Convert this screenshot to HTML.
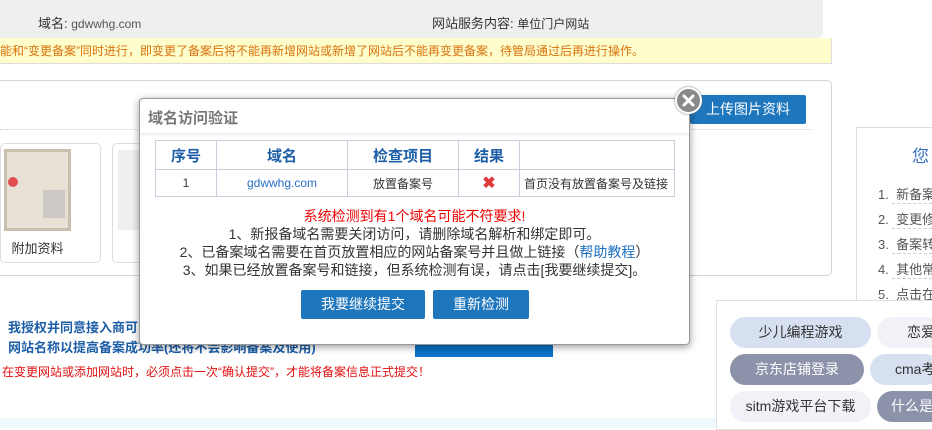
<!DOCTYPE html>
<html><head><meta charset="utf-8">
<style>
*{margin:0;padding:0;box-sizing:border-box}
body{width:932px;height:428px;overflow:hidden;background:#fff;font-family:"Liberation Sans","Noto Sans CJK SC",sans-serif;position:relative;font-size:12px;color:#333}
.a{position:absolute}
.tag{position:absolute;height:31px;border-radius:16px;font-size:14px;line-height:31px;text-align:center;white-space:nowrap;overflow:hidden}
</style></head><body>
<div class="a" style="left:0;top:0;width:823px;height:38px;background:#efefef;border-bottom-right-radius:6px"></div>
<div class="a" style="left:38px;top:13px;font-size:13px;color:#333">域名: <span style="font-size:12px;color:#555">gdwwhg.com</span></div>
<div class="a" style="left:432px;top:13px;font-size:13px;color:#333">网站服务内容: <span style="font-size:12px">单位门户网站</span></div>
<div class="a" style="left:0;top:38px;width:832px;height:26px;background:#fefdcc;border-bottom:1px solid #ddd;border-right:1px solid #ddd;color:#d9730e;font-size:12px;line-height:26px;white-space:nowrap">能和“变更备案”同时进行，即变更了备案后将不能再新增网站或新增了网站后不能再变更备案，待管局通过后再进行操作。</div>

<div class="a" style="left:-5px;top:80px;width:837px;height:196px;border:1px solid #d5d5d5;border-radius:5px"></div>
<div class="a" style="left:690px;top:95px;width:116px;height:29px;background:#1e76bd;border-radius:2px;color:#fff;font-size:14px;line-height:29px;text-align:center">上传图片资料</div>
<div class="a" style="left:0;top:129px;width:812px;border-top:1px dotted #ccc"></div>
<div class="a" style="left:0;top:143px;width:101px;height:120px;border:1px solid #ddd;border-radius:5px"></div>
<div class="a" style="left:4px;top:149px;width:67px;height:82px;background:#e8e2d6;border:3px solid #c9bfae"></div>
<div class="a" style="left:8px;top:177px;width:10px;height:10px;border-radius:50%;background:#e05050"></div>
<div class="a" style="left:43px;top:190px;width:22px;height:28px;background:#bbb;opacity:.6"></div>
<div class="a" style="left:0;top:238px;width:75px;text-align:center;font-size:13px">附加资料</div>
<div class="a" style="left:112px;top:143px;width:40px;height:120px;border:1px solid #ddd;border-radius:5px"></div>
<div class="a" style="left:118px;top:150px;width:30px;height:80px;background:#eef0f0"></div>

<div class="a" style="left:8px;top:318px;font-size:13px;font-weight:bold;color:#1d5ea8;line-height:20px">我授权并同意接入商可<br>网站名称以提高备案成功率(还将不会影响备案及使用)</div>
<div class="a" style="left:415px;top:333px;width:138px;height:24px;background:#0b73c8"></div>
<div class="a" style="left:2px;top:363px;font-size:12px;color:#e01010;white-space:nowrap">在变更网站或添加网站时，必须点击一次“确认提交”，才能将备案信息正式提交！</div>
<div class="a" style="left:0;top:418px;width:720px;height:10px;background:#eef8fd"></div>

<div class="a" style="left:856px;top:127px;width:80px;height:200px;border:1px solid #ddd"></div>
<div class="a" style="left:912px;top:142px;font-size:17px;color:#3a6fc0">您</div>
<div class="a" style="left:878px;top:182px;width:60px;font-size:13px;color:#555;line-height:25px;white-space:nowrap">
<div>1.&nbsp; 新备案</div><div>2.&nbsp; 变更修</div><div>3.&nbsp; 备案转</div><div>4.&nbsp; 其他常</div><div>5.&nbsp; 点击在</div></div>
<div class="a" style="left:892px;top:203px;width:40px;border-top:1px dashed #ccc"></div>
<div class="a" style="left:892px;top:228px;width:40px;border-top:1px dashed #ccc"></div>
<div class="a" style="left:892px;top:253px;width:40px;border-top:1px dashed #ccc"></div>
<div class="a" style="left:892px;top:278px;width:40px;border-top:1px dashed #ccc"></div>

<div class="a" style="left:716px;top:300px;width:220px;height:130px;background:#fff;border:1px solid #e0e0e0"></div>
<div class="tag" style="left:730px;top:317px;width:141px;background:#d6e0f0;color:#333">少儿编程游戏</div>
<div class="tag" style="left:877px;top:317px;width:70px;background:#f0f2f7;color:#333;text-align:left;padding-left:30px">恋爱</div>
<div class="tag" style="left:730px;top:354px;width:134px;background:#8d92ab;color:#fff">京东店铺登录</div>
<div class="tag" style="left:870px;top:354px;width:70px;background:#d6e0f0;color:#333;text-align:left;padding-left:25px">cma考</div>
<div class="tag" style="left:730px;top:391px;width:141px;background:#f0f2f7;color:#333">sitm游戏平台下载</div>
<div class="tag" style="left:877px;top:391px;width:70px;background:#8d92ab;color:#fff;text-align:left;padding-left:14px">什么是</div>

<div class="a" style="left:139px;top:98px;width:551px;height:247px;background:#fff;border:1px solid #999;border-radius:4px;box-shadow:0 2px 8px rgba(0,0,0,.4)"></div>
<div class="a" style="left:148px;top:107px;font-size:15px;color:#777;font-weight:bold">域名访问验证</div>
<div class="a" style="left:140px;top:133px;width:549px;height:4px;background:linear-gradient(#eee,#fff)"></div>
<table class="a" style="left:155px;top:140px;width:520px;border-collapse:collapse;font-size:13px;text-align:center">
<tr style="height:29px;color:#1d5ea8;font-weight:bold;font-size:15px"><td style="border:1px solid #ccd;width:61px">序号</td><td style="border:1px solid #ccd;width:131px">域名</td><td style="border:1px solid #ccd;width:111px">检查项目</td><td style="border:1px solid #ccd;width:61px">结果</td><td style="border:1px solid #ccd"></td></tr>
<tr style="height:27px;font-size:12px"><td style="border:1px solid #ccd">1</td><td style="border:1px solid #ccd;color:#2a6fc9">gdwwhg.com</td><td style="border:1px solid #ccd">放置备案号</td><td style="border:1px solid #ccd;color:#e03a3a;font-size:16px;font-weight:bold">✖</td><td style="border:1px solid #ccd;text-align:left;padding-left:4px">首页没有放置备案号及链接</td></tr>
</table>
<div class="a" style="left:139px;top:207px;width:551px;text-align:center;font-size:14px;line-height:18px;color:#333">
<div style="color:#e00">系统检测到有1个域名可能不符要求!</div>
<div>1、新报备域名需要关闭访问，请删除域名解析和绑定即可。</div>
<div>2、已备案域名需要在首页放置相应的网站备案号并且做上链接（<span style="color:#1d6fc0">帮助教程</span>）</div>
<div>3、如果已经放置备案号和链接，但系统检测有误，请点击[我要继续提交]。</div></div>
<div class="a" style="left:301px;top:290px;width:124px;height:29px;background:#1e76bd;border-radius:2px;color:#fff;font-size:14px;line-height:29px;text-align:center">我要继续提交</div>
<div class="a" style="left:433px;top:290px;width:96px;height:29px;background:#1e76bd;border-radius:2px;color:#fff;font-size:14px;line-height:29px;text-align:center">重新检测</div>
<div class="a" style="left:675px;top:87px;width:27px;height:27px;border-radius:50%;background:#8a8a8a;border:2px solid #fff;box-shadow:0 0 2px #666"></div>
<svg class="a" style="left:680px;top:92px" width="17" height="17"><path d="M4 4L13 13M13 4L4 13" stroke="#fff" stroke-width="3" stroke-linecap="round"/></svg>
</body></html>
